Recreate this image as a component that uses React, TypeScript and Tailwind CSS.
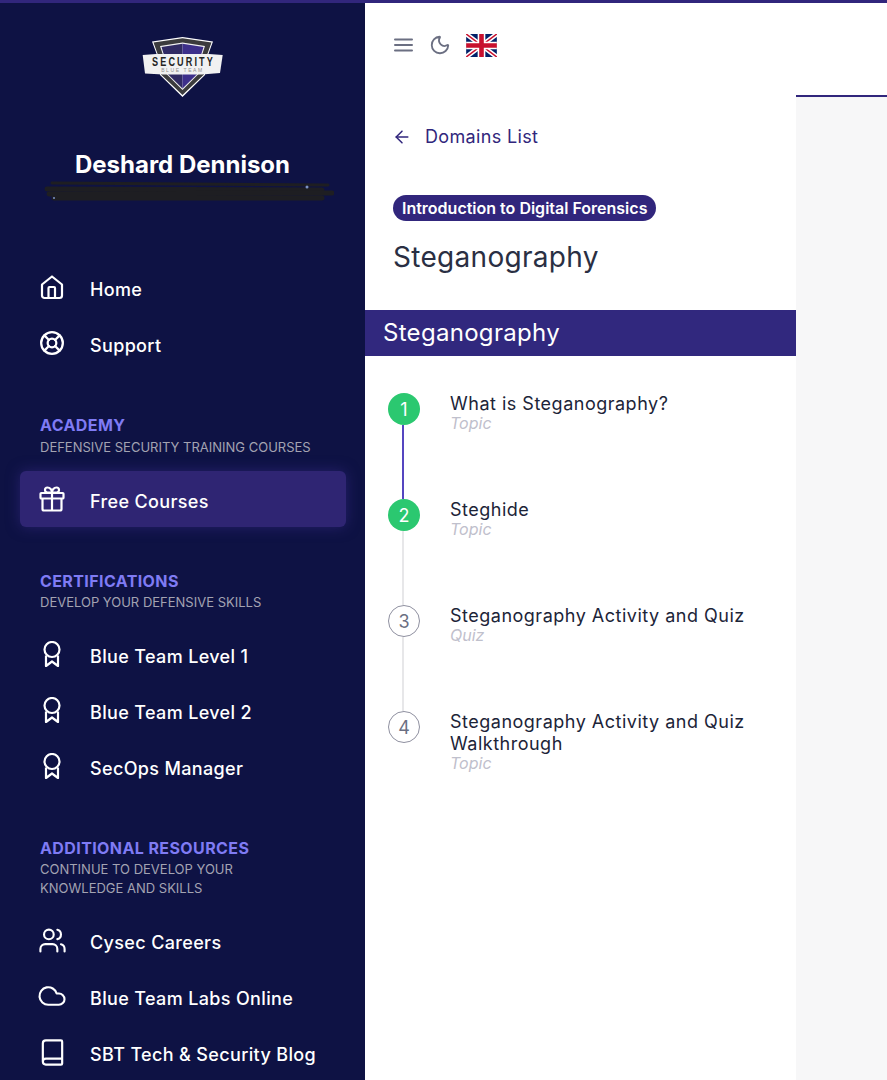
import { ArrowLeft, Book, Cloud, LifeBuoy, Moon, Users } from 'lucide-react';
import type { ReactNode } from 'react';

const font = { fontFamily: 'Inter, "Liberation Sans", sans-serif' };

function Logo() {
  return (
    <svg width="82" height="60" viewBox="0 0 82 60" className="block">
      <path d="M10 4.5 L40.5 0 L71 4.5 L66 18 L63 38 L40.5 60 L18 38 L15 18 Z" fill="#ffffff" />
      <path d="M11.5 5.5 L40.5 1.2 L69.5 5.5 L65 18 L62 37.5 L40.5 58 L19 37.5 L16 18 Z" fill="#3b3b3d" />
      <path d="M18 9 L40.5 5.5 L63 9 L60 18 L57.5 36 L40.5 53 L23.5 36 L21 18 Z" fill="#f2f2f2" />
      <path d="M19.5 10 L40.5 6.8 L40.5 51.5 L24.7 36 L22 18 Z" fill="#302a63" />
      <path d="M61.5 10 L40.5 6.8 L40.5 51.5 L56.3 36 L59 18 Z" fill="#3d2f8a" />
      <path d="M0.7 18 L14 17 L67 17 L80.7 18 L78 36 L60 37.5 L21 37.5 L3 36.5 Z" fill="#f1f1f1" />
      <text transform="translate(41.5 29) scale(0.7 1)" textAnchor="middle" fontSize="13" fontWeight="700" fill="#232323" letterSpacing="3" fontFamily="Liberation Sans, sans-serif">
        SECURITY
      </text>
      <text x="40.5" y="35" textAnchor="middle" fontSize="5" fill="#8d8d8d" letterSpacing="1.6" fontFamily="Liberation Sans, sans-serif">
        BLUE TEAM
      </text>
    </svg>
  );
}

function Scribble() {
  return (
    <svg width="290" height="24" viewBox="0 0 290 24" className="block">
      <g stroke="#1e1e22" fill="none" strokeLinecap="round">
        <path d="M8 3 L284 5" strokeWidth="3" />
        <path d="M3 9 L278 10" strokeWidth="5" />
        <path d="M5 14 L288 13" strokeWidth="5" />
        <path d="M10 18 L278 18" strokeWidth="5" />
      </g>
      <circle cx="263" cy="7" r="1.5" fill="#7c93c4" />
      <circle cx="10" cy="18" r="1" fill="#7c93c4" />
    </svg>
  );
}

function UkFlag() {
  return (
    <svg width="31" height="23" viewBox="0 0 60 45" className="block">
      <rect width="60" height="45" fill="#012169" />
      <path d="M0 0 L60 45 M60 0 L0 45" stroke="#ffffff" strokeWidth="9" />
      <path d="M0 0 L60 45 M60 0 L0 45" stroke="#c8102e" strokeWidth="3" />
      <path d="M30 0 V45 M0 22.5 H60" stroke="#ffffff" strokeWidth="15" />
      <path d="M30 0 V45 M0 22.5 H60" stroke="#c8102e" strokeWidth="9" />
    </svg>
  );
}

function HomeIcon() {
  return (
    <svg width="26" height="26" viewBox="0 0 26 26" fill="none" stroke="currentColor" strokeWidth="2.2" strokeLinejoin="round">
      <path d="M13 2.5 L23 10.5 V21.5 A2.5 2.5 0 0 1 20.5 24 H5.5 A2.5 2.5 0 0 1 3 21.5 V10.5 Z" />
      <path d="M9.5 24 V14 A1 1 0 0 1 10.5 13 H15 A1 1 0 0 1 16 14 V24" />
    </svg>
  );
}

function GiftIcon() {
  return (
    <svg width="26" height="26" viewBox="0 0 26 26" fill="none" stroke="currentColor" strokeWidth="2.2" strokeLinejoin="round">
      <rect x="1.5" y="7" width="23" height="5.5" rx="0.8" />
      <path d="M3.5 12.5 V23 A1.5 1.5 0 0 0 5 24.5 H21 A1.5 1.5 0 0 0 22.5 23 V12.5" />
      <path d="M13 6.5 V24.5" />
      <path d="M13 6.5 H8.5 A2.5 2.5 0 1 1 8.5 1.5 C11 1.5 13 4 13 6.5 Z" />
      <path d="M13 6.5 H17.5 A2.5 2.5 0 1 0 17.5 1.5 C15 1.5 13 4 13 6.5 Z" />
    </svg>
  );
}

function AwardIcon() {
  return (
    <svg width="26" height="26" viewBox="0 0 26 26" fill="none" stroke="currentColor" strokeWidth="2.2" strokeLinejoin="round">
      <circle cx="13" cy="8.5" r="7.5" />
      <path d="M7 14.5 V25 L13 20.5 L19 25 V14.5" />
    </svg>
  );
}

function NavItem({ icon, label, active }: { icon: ReactNode; label: string; active?: boolean }) {
  return (
    <div
      className={
        active
          ? 'flex h-[56px] items-center rounded-md bg-[#2f2573] pl-[20px] pt-[5px] shadow-[0_0_14px_rgba(49,38,124,0.7)]'
          : 'flex h-[56px] items-center pl-[20px]'
      }
    >
      <span className="flex w-[26px] -translate-x-[1px] -translate-y-[3px] justify-center text-white">{icon}</span>
      <span className="ml-[24px] text-[18px] font-medium leading-none tracking-[0.35px] text-white">{label}</span>
    </div>
  );
}

function SectionHead({ title, sub, subGap }: { title: string; sub: ReactNode; subGap?: string }) {
  return (
    <div className="pl-[40px]">
      <div className="text-[16px] font-bold leading-[20px] tracking-[0.4px] text-[#7f7bf4]">{title}</div>
      <div className={`${subGap ?? 'mt-[2px]'} text-[13px] leading-[19px] whitespace-nowrap text-[#a3a3b2]`}>{sub}</div>
    </div>
  );
}

function Step({ n, title, kind, done, last }: { n: number; title: ReactNode; kind: string; done?: boolean; last?: boolean }) {
  return (
    <div className="relative flex h-[106px]">
      {!last && (
        <div className={n === 1 ? 'absolute left-[14px] top-[32px] bottom-0 w-[2px] bg-[#5546c0]' : 'absolute left-[14px] top-[32px] bottom-0 w-[2px] bg-[#e7e7e9]'} />
      )}
      <div
        className={
          done
            ? 'flex h-[32px] w-[32px] shrink-0 items-center justify-center rounded-full bg-[#2bc870] text-[18px] text-white'
            : 'flex h-[32px] w-[32px] shrink-0 items-center justify-center rounded-full border border-[#8f90a0] bg-white text-[18px] text-[#6b6f82]'
        }
      >
        {n}
      </div>
      <div className="ml-[30px]">
        <div className="text-[18px] font-normal leading-[22px] tracking-[0.5px] text-[#1c2438]">{title}</div>
        <div className="-mt-[1px] text-[16px] italic leading-[18px] text-[#bfc0cc]">{kind}</div>
      </div>
    </div>
  );
}

export default function App() {
  return (
    <div className="flex h-[1080px] overflow-hidden border-t-[3px] border-[#31267c] bg-white" style={font}>
      <aside className="w-[365px] shrink-0 bg-[#0e1244]">
        <div className="flex justify-center pt-[34px]">
          <Logo />
        </div>
        <div className="mt-[53px] text-center text-[24px] font-bold leading-[29px] text-white">Deshard Dennison</div>
        <div className="mt-[1px] flex justify-center pl-[13px]">
          <Scribble />
        </div>
        <nav className="mt-[58px]">
          <div className="px-[20px]">
            <NavItem icon={<HomeIcon />} label="Home" />
            <NavItem icon={<LifeBuoy size={26} strokeWidth={2.1} className="shrink-0" />} label="Support" />
          </div>
          <div className="mt-[41px]">
            <SectionHead title="ACADEMY" sub="DEFENSIVE SECURITY TRAINING COURSES" subGap="mt-[3px]" />
          </div>
          <div className="mt-[14px] pl-[20px] pr-[19px]">
            <NavItem active icon={<GiftIcon />} label="Free Courses" />
          </div>
          <div className="mt-[44px]">
            <SectionHead title="CERTIFICATIONS" sub="DEVELOP YOUR DEFENSIVE SKILLS" />
          </div>
          <div className="mt-[17px] px-[20px]">
            <NavItem icon={<AwardIcon />} label="Blue Team Level 1" />
            <NavItem icon={<AwardIcon />} label="Blue Team Level 2" />
            <NavItem icon={<AwardIcon />} label="SecOps Manager" />
          </div>
          <div className="mt-[41px]">
            <SectionHead
              title="ADDITIONAL RESOURCES"
              sub={
                <>
                  CONTINUE TO DEVELOP YOUR
                  <br />
                  KNOWLEDGE AND SKILLS
                </>
              }
            />
          </div>
          <div className="mt-[17px] px-[20px]">
            <NavItem icon={<Users size={29} strokeWidth={1.75} className="shrink-0" />} label="Cysec Careers" />
            <NavItem icon={<Cloud size={30} strokeWidth={1.7} className="shrink-0" />} label="Blue Team Labs Online" />
            <NavItem icon={<Book size={29} strokeWidth={1.8} className="shrink-0" />} label="SBT Tech & Security Blog" />
          </div>
        </nav>
      </aside>

      <div className="flex min-w-0 flex-1 flex-col bg-[#f7f7f8]">
        <header className="flex h-[92px] shrink-0 items-center bg-white pb-[8px] pl-[29px] shadow-[0_1px_2px_rgba(0,0,0,0.15)]">
          <svg width="19" height="14" viewBox="0 0 19 14" stroke="#6b6f82" strokeWidth="2" strokeLinecap="round" className="block">
            <path d="M1 1.5 H18 M1 7 H18 M1 12.5 H18" />
          </svg>
          <Moon size={22} strokeWidth={2} className="ml-[16px] text-[#6b6f82]" />
          <span className="ml-[15px]">
            <UkFlag />
          </span>
        </header>
        <div className="flex flex-1">
          <main className="w-[431px] shrink-0 bg-white">
            <div className="flex items-center pl-[27px] pt-[30px] text-[18px] leading-[24px] tracking-[0.35px] text-[#31267c]">
              <ArrowLeft size={20} strokeWidth={1.8} className="mr-[13px]" />
              Domains List
            </div>
            <div className="mt-[46px] pl-[28px]">
              <span className="inline-block rounded-full bg-[#31267c] px-[9px] text-[16px] font-semibold leading-[26px] text-white">
                Introduction to Digital Forensics
              </span>
            </div>
            <h1 className="mt-[18px] pl-[28px] text-[28px] font-normal leading-[36px] tracking-[0.3px] text-[#2a2f43]">Steganography</h1>
            <div className="mt-[35px] h-[46px] bg-[#31287e] pl-[18px] text-[24px] font-normal leading-[46px] tracking-[0.3px] text-white">Steganography</div>
            <div className="mt-[37px] pl-[23px] pr-[20px]">
              <Step n={1} title="What is Steganography?" kind="Topic" done />
              <Step n={2} title="Steghide" kind="Topic" done />
              <Step n={3} title="Steganography Activity and Quiz" kind="Quiz" />
              <Step n={4} title="Steganography Activity and Quiz Walkthrough" kind="Topic" last />
            </div>
          </main>
          <div className="h-[2px] flex-1 bg-[#31267c]" />
        </div>
      </div>
    </div>
  );
}
